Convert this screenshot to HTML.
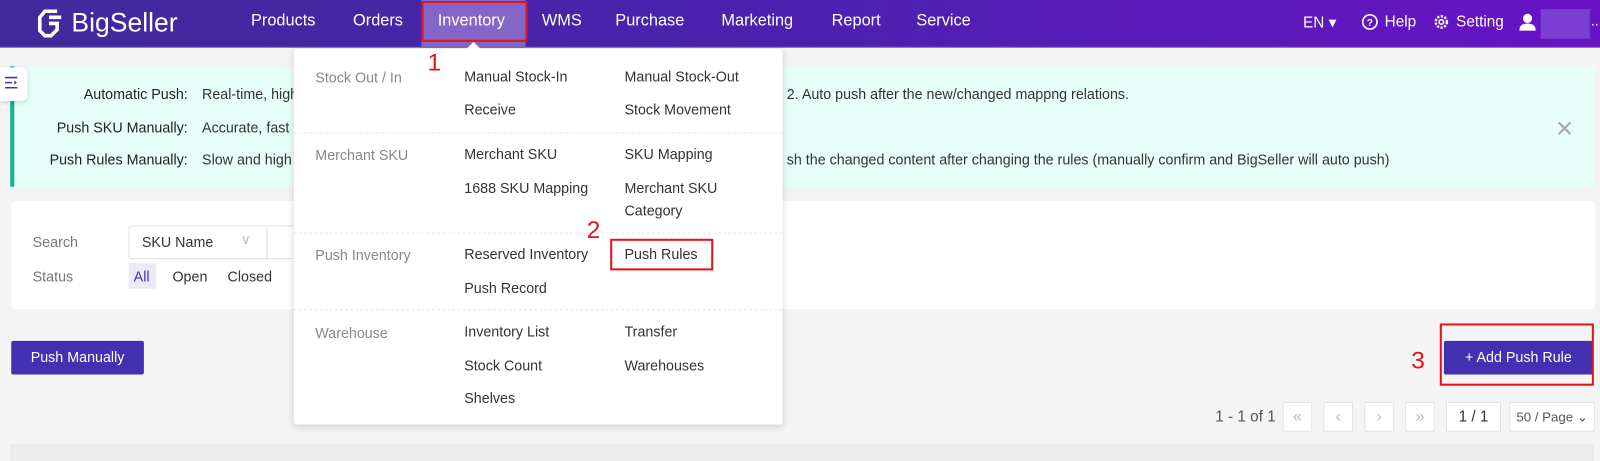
<!DOCTYPE html>
<html><head><meta charset="utf-8"><style>
*{margin:0;padding:0;box-sizing:border-box}
body{width:1600px;height:451px;overflow:hidden;background:#f4f4f4;font-family:"Liberation Sans",sans-serif;font-size:14px;color:#333;position:relative}
#w{position:absolute;left:0;top:0;width:1568px;height:442px;transform:scale(1.0204);transform-origin:0 0}
.a{position:absolute;white-space:nowrap}
.hdr{position:absolute;left:-20px;top:0;width:1640px;height:47px;background:linear-gradient(90deg,#3f2b9b 0%,#4a22ae 45%,#6a12c6 100%);border-bottom:1px solid #8b6fd0}
.nav{color:#fff;font-size:16px;top:12px}
.dd{position:absolute;left:288px;top:48px;width:479px;height:368px;background:#fff;box-shadow:0 2px 8px rgba(0,0,0,.15);border-radius:3px}
.sec{color:#888;font-size:14px}
.it{color:#333;font-size:14px}
.dash{position:absolute;left:0;width:479px;border-top:1px dashed #e6e6e6}
.red{border:2px solid #e0141b;position:absolute}
.num{color:#e0141b;font-size:24px}
.btn{position:absolute;background:#4431b1;color:#fff;font-size:14px;text-align:center;border-radius:2px;white-space:nowrap}
.pg{position:absolute;top:394px;width:29px;height:29px;border:1px solid #e3e3e3;background:#fff;color:#bbb;text-align:center;line-height:27px;font-size:16px;white-space:nowrap}
</style></head><body><div id="w">
<div class="hdr"></div>
<svg class="a" style="left:36px;top:8px" width="28" height="30" viewBox="0 0 28 30"><path d="M20 3 L8 3 L3 9 L3 22 L8 27 L14 27 L20 21 L20 15 L12 15" fill="none" stroke="#fff" stroke-width="3.5"/><path d="M12 9 L24 9" stroke="#fff" stroke-width="3.5"/></svg>
<div class="a" style="left:70px;top:7px;color:#fff;font-size:26px">BigSeller</div>
<div class="a nav" style="left:246px">Products</div>
<div class="a nav" style="left:346px">Orders</div>
<div class="a" style="left:413px;top:0;width:102px;height:47px;background:#8466c8"></div>
<div class="red" style="left:413px;top:1px;width:104px;height:40px"></div>
<div class="a nav" style="left:429px">Inventory</div>
<div class="a nav" style="left:531px">WMS</div>
<div class="a nav" style="left:603px">Purchase</div>
<div class="a nav" style="left:707px">Marketing</div>
<div class="a nav" style="left:815px">Report</div>
<div class="a nav" style="left:898px">Service</div>
<div class="a" style="left:1277px;top:13px;color:#fff;font-size:15px">EN ▾</div>
<svg class="a" style="left:1334px;top:13px" width="17" height="17" viewBox="0 0 17 17"><circle cx="8.5" cy="8.5" r="7" fill="none" stroke="#fff" stroke-width="1.6"/><text x="8.5" y="12.5" font-size="10" fill="#fff" text-anchor="middle" font-family="Liberation Sans" font-weight="bold">?</text></svg>
<div class="a" style="left:1357px;top:13px;color:#fff;font-size:15px">Help</div>
<svg class="a" style="left:1404px;top:13px" width="17" height="17" viewBox="0 0 17 17"><circle cx="8.5" cy="8.5" r="5.5" fill="none" stroke="#fff" stroke-width="2.4" stroke-dasharray="2.2 1.4"/><circle cx="8.5" cy="8.5" r="2.2" fill="none" stroke="#fff" stroke-width="1.5"/></svg>
<div class="a" style="left:1427px;top:13px;color:#fff;font-size:15px">Setting</div>
<svg class="a" style="left:1488px;top:12px" width="18" height="19" viewBox="0 0 18 19"><circle cx="9" cy="6" r="4.5" fill="#fff"/><path d="M1 18 Q1 11 9 11 Q17 11 17 18Z" fill="#fff"/></svg>
<div class="a" style="left:1510px;top:9px;width:48px;height:29px;background:#7a3fd0"></div>
<div class="a" style="left:1559px;top:12px;color:#fff;font-size:14px">..</div>

<div class="a" style="left:10px;top:65px;width:1552px;height:118px;background:#e6fff9;border-left:4px solid #16b38a"></div>
<div class="a" style="left:0;top:66px;width:27px;height:33px;background:#fff;border-radius:0 6px 6px 0;box-shadow:0 1px 4px rgba(0,0,0,.15)"></div>
<svg class="a" style="left:4px;top:74px" width="14" height="14" viewBox="0 0 14 14"><path d="M1 2H13M1 7H8M1 12H13" stroke="#4431b1" stroke-width="1.5"/><path d="M10 5L12.5 7L10 9Z" fill="#4431b1"/></svg>
<div class="a" style="right:1384px;top:84px;color:#222">Automatic Push:</div>
<div class="a" style="right:1384px;top:117px;color:#222">Push SKU Manually:</div>
<div class="a" style="right:1384px;top:148px;color:#222">Push Rules Manually:</div>
<div class="a" style="left:198px;top:84px">Real-time, high</div>
<div class="a" style="left:198px;top:117px">Accurate, fast</div>
<div class="a" style="left:198px;top:148px">Slow and high</div>
<div class="a" style="left:771px;top:84px">2. Auto push after the new/changed mappng relations.</div>
<div class="a" style="left:771px;top:148px">sh the changed content after changing the rules (manually confirm and BigSeller will auto push)</div>
<div class="a" style="left:1524px;top:114px;color:#aaa;font-size:22px">✕</div>

<div class="a" style="left:11px;top:197px;width:1552px;height:106px;background:#fff;border-radius:4px"></div>
<div class="a" style="left:32px;top:229px;color:#777">Search</div>
<div class="a" style="left:32px;top:263px;color:#777">Status</div>
<div class="a" style="left:126px;top:221px;width:170px;height:33px;border:1px solid #e0e0e0;border-radius:3px"></div>
<div class="a" style="left:261px;top:221px;height:33px;border-left:1px solid #e0e0e0"></div>
<div class="a" style="left:139px;top:229px">SKU Name</div>
<div class="a" style="left:236px;top:227px;color:#bbb;font-size:13px">∨</div>
<div class="a" style="left:126px;top:258px;width:27px;height:25px;background:#ede9fb"></div>
<div class="a" style="left:131px;top:263px;color:#4431b1">All</div>
<div class="a" style="left:169px;top:263px">Open</div>
<div class="a" style="left:223px;top:263px">Closed</div>

<div class="btn" style="left:11px;top:334px;width:130px;height:33px;line-height:33px">Push Manually</div>
<div class="btn" style="left:1415px;top:334px;width:146px;height:33px;line-height:33px">+ Add Push Rule</div>
<div class="red" style="left:1411px;top:317px;width:151px;height:61px"></div>
<div class="a num" style="left:1383px;top:340px">3</div>

<div class="a" style="left:1191px;top:400px;color:#555;font-size:15px">1 - 1 of 1</div>
<div class="pg" style="left:1257px">«</div>
<div class="pg" style="left:1297px">‹</div>
<div class="pg" style="left:1337px">›</div>
<div class="pg" style="left:1377px">»</div>
<div class="pg" style="left:1417px;width:54px;color:#333;font-size:15px">1 / 1</div>
<div class="pg" style="left:1479px;width:84px;color:#555;font-size:13px;text-align:left;padding-left:6px">50 / Page ⌄</div>
<div class="a" style="left:10px;top:435px;width:1552px;height:17px;background:#ececec"></div>

<div class="dd">
 <div class="a sec" style="left:21px;top:20px">Stock Out / In</div>
 <div class="a it" style="left:167px;top:19px">Manual Stock-In</div>
 <div class="a it" style="left:324px;top:19px">Manual Stock-Out</div>
 <div class="a it" style="left:167px;top:51px">Receive</div>
 <div class="a it" style="left:324px;top:51px">Stock Movement</div>
 <div class="dash" style="top:82px"></div>
 <div class="a sec" style="left:21px;top:96px">Merchant SKU</div>
 <div class="a it" style="left:167px;top:95px">Merchant SKU</div>
 <div class="a it" style="left:324px;top:95px">SKU Mapping</div>
 <div class="a it" style="left:167px;top:128px">1688 SKU Mapping</div>
 <div class="a it" style="left:324px;top:128px">Merchant SKU</div>
 <div class="a it" style="left:324px;top:150px">Category</div>
 <div class="dash" style="top:180px"></div>
 <div class="a sec" style="left:21px;top:194px">Push Inventory</div>
 <div class="a it" style="left:167px;top:193px">Reserved Inventory</div>
 <div class="a it" style="left:324px;top:193px">Push Rules</div>
 <div class="a it" style="left:167px;top:226px">Push Record</div>
 <div class="dash" style="top:255px"></div>
 <div class="a sec" style="left:21px;top:270px">Warehouse</div>
 <div class="a it" style="left:167px;top:269px">Inventory List</div>
 <div class="a it" style="left:324px;top:269px">Transfer</div>
 <div class="a it" style="left:167px;top:302px">Stock Count</div>
 <div class="a it" style="left:324px;top:302px">Warehouses</div>
 <div class="a it" style="left:167px;top:334px">Shelves</div>
</div>
<div class="a" style="left:457px;top:41px;width:0;height:0;border-left:7px solid transparent;border-right:7px solid transparent;border-bottom:7px solid #fff"></div>
<div class="red" style="left:598px;top:234px;width:101px;height:31px"></div>
<div class="a num" style="left:419px;top:48px">1</div>
<div class="a num" style="left:575px;top:212px">2</div>
</div></body></html>
